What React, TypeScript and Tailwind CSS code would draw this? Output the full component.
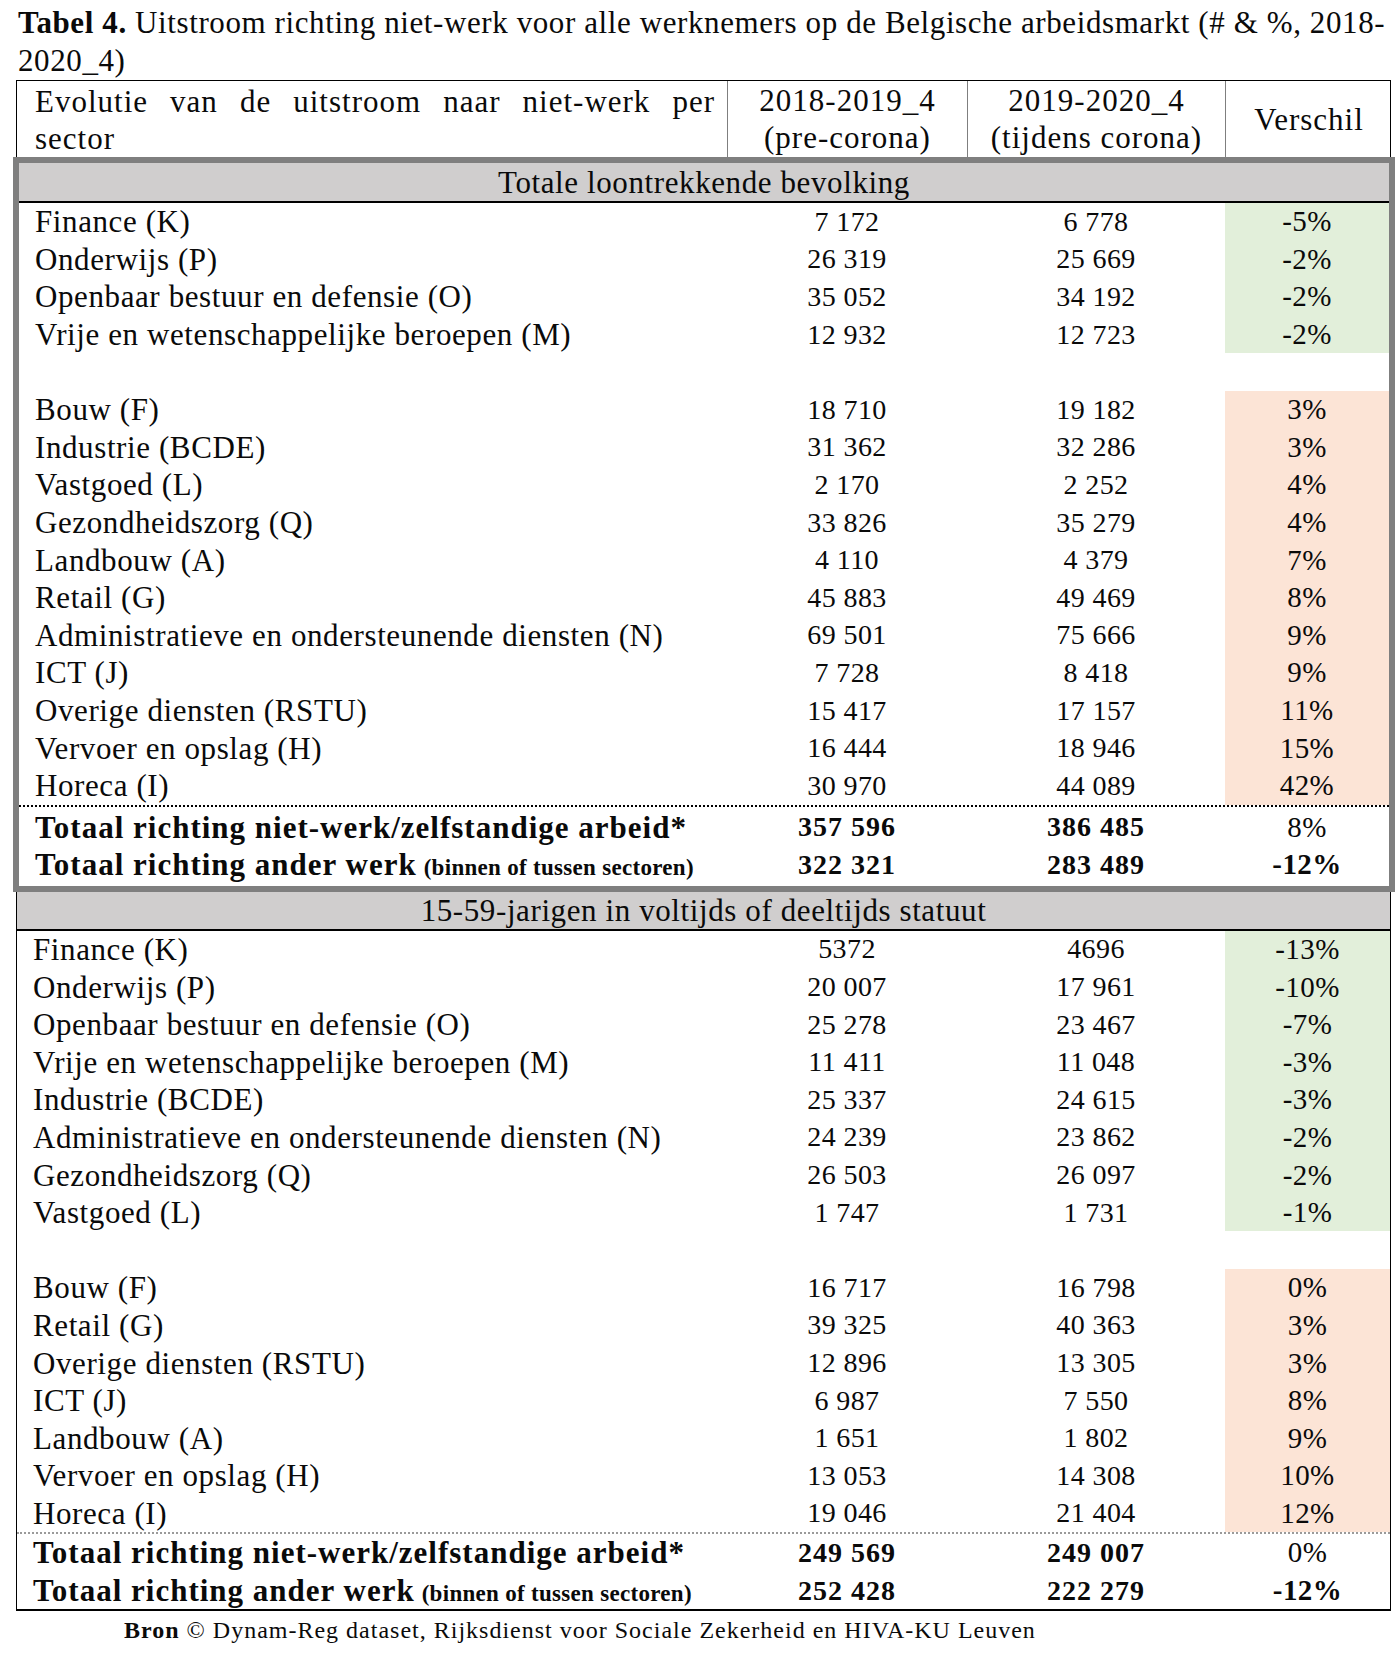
import React from 'react';

type Row = [string, string, string, string];

const s1Green: Row[] = [
  ['Finance (K)', '7 172', '6 778', '-5%'],
  ['Onderwijs (P)', '26 319', '25 669', '-2%'],
  ['Openbaar bestuur en defensie (O)', '35 052', '34 192', '-2%'],
  ['Vrije en wetenschappelijke beroepen (M)', '12 932', '12 723', '-2%'],
];

const s1Pink: Row[] = [
  ['Bouw (F)', '18 710', '19 182', '3%'],
  ['Industrie (BCDE)', '31 362', '32 286', '3%'],
  ['Vastgoed (L)', '2 170', '2 252', '4%'],
  ['Gezondheidszorg (Q)', '33 826', '35 279', '4%'],
  ['Landbouw (A)', '4 110', '4 379', '7%'],
  ['Retail (G)', '45 883', '49 469', '8%'],
  ['Administratieve en ondersteunende diensten (N)', '69 501', '75 666', '9%'],
  ['ICT (J)', '7 728', '8 418', '9%'],
  ['Overige diensten (RSTU)', '15 417', '17 157', '11%'],
  ['Vervoer en opslag (H)', '16 444', '18 946', '15%'],
  ['Horeca (I)', '30 970', '44 089', '42%'],
];

const s2Green: Row[] = [
  ['Finance (K)', '5372', '4696', '-13%'],
  ['Onderwijs (P)', '20 007', '17 961', '-10%'],
  ['Openbaar bestuur en defensie (O)', '25 278', '23 467', '-7%'],
  ['Vrije en wetenschappelijke beroepen (M)', '11 411', '11 048', '-3%'],
  ['Industrie (BCDE)', '25 337', '24 615', '-3%'],
  ['Administratieve en ondersteunende diensten (N)', '24 239', '23 862', '-2%'],
  ['Gezondheidszorg (Q)', '26 503', '26 097', '-2%'],
  ['Vastgoed (L)', '1 747', '1 731', '-1%'],
];

const s2Pink: Row[] = [
  ['Bouw (F)', '16 717', '16 798', '0%'],
  ['Retail (G)', '39 325', '40 363', '3%'],
  ['Overige diensten (RSTU)', '12 896', '13 305', '3%'],
  ['ICT (J)', '6 987', '7 550', '8%'],
  ['Landbouw (A)', '1 651', '1 802', '9%'],
  ['Vervoer en opslag (H)', '13 053', '14 308', '10%'],
  ['Horeca (I)', '19 046', '21 404', '12%'],
];

// kolommen binnen het dikke kader (blok 1) en binnen het dunne kader (blok 2)
const cols1 = 'grid grid-cols-[708px_240px_258px_164px]';
const cols2 = 'grid grid-cols-[710px_240px_258px_165px]';

const LABEL = 'pl-[16px] whitespace-nowrap text-[31px] tracking-[0.6px]';
const NUM = 'text-center text-[28px] tracking-[0.4px]';
const PCT = 'text-[29px] tracking-[0.4px]';

function DataRow({ row, tint, cols }: { row: Row; tint: string; cols: string }) {
  return (
    <div className={`${cols} h-[37.6px] items-center`}>
      <div className={LABEL}>{row[0]}</div>
      <div className={NUM}>{row[1]}</div>
      <div className={NUM}>{row[2]}</div>
      <div className={`h-full flex items-center justify-center ${PCT} ${tint}`}>{row[3]}</div>
    </div>
  );
}

function Blank({ cols }: { cols: string }) {
  return (
    <div className={`${cols} h-[37.6px]`}>
      <div />
      <div />
      <div />
      <div />
    </div>
  );
}

function Totals({ cols, a, b }: { cols: string; a: Row; b: Row }) {
  return (
    <>
      <div className={`${cols} h-[37.6px] items-center`}>
        <div className="pl-[16px] whitespace-nowrap font-bold text-[31px] tracking-[1px]">{a[0]}</div>
        <div className="text-center font-bold text-[28px] tracking-[1px]">{a[1]}</div>
        <div className="text-center font-bold text-[28px] tracking-[1px]">{a[2]}</div>
        <div className={`text-center ${PCT}`}>{a[3]}</div>
      </div>
      <div className={`${cols} h-[37.6px] items-center`}>
        <div className="pl-[16px] whitespace-nowrap">
          <span className="font-bold text-[31px] tracking-[1px]">{b[0]}</span>{' '}
          <span className="font-bold text-[23px] tracking-[0.3px]">(binnen of tussen sectoren)</span>
        </div>
        <div className="text-center font-bold text-[28px] tracking-[1px]">{b[1]}</div>
        <div className="text-center font-bold text-[28px] tracking-[1px]">{b[2]}</div>
        <div className={`text-center font-bold ${PCT}`}>{b[3]}</div>
      </div>
    </>
  );
}

const GREEN = 'bg-[#e2efda]';
const PINK = 'bg-[#fce4d6]';

export default function App() {
  return (
    <div className="w-[1400px] min-h-[1653px] bg-white font-[family-name:'Liberation_Serif',serif] text-[#0a0a0a] text-[28px] leading-none">
      {/* Titel */}
      <div className="pt-[4px] pl-[18px] text-[31px] tracking-[0.6px] leading-[38px] whitespace-nowrap">
        <span className="font-bold">Tabel 4.</span> Uitstroom richting niet-werk voor alle werknemers op de Belgische arbeidsmarkt (# &amp; %, 2018-
        <br />
        2020_4)
      </div>

      <div className="ml-[16px] w-[1375px]">
        {/* Kolomkoppen */}
        <div className="grid grid-cols-[711px_240px_258px_166px] h-[77px] border border-b-0 border-black text-[31px] tracking-[1px]">
          <div className="border-r border-[#7f7f7f] pl-[18px] pr-[12px] pt-[2px] leading-[37px]">
            <div className="text-justify [text-align-last:justify]">Evolutie van de uitstroom naar niet-werk per</div>
            <div>sector</div>
          </div>
          <div className="border-r border-[#7f7f7f] flex flex-col items-center justify-center leading-[37px]">
            <span>2018-2019_4</span>
            <span>(pre-corona)</span>
          </div>
          <div className="border-r border-[#7f7f7f] flex flex-col items-center justify-center leading-[37px]">
            <span>2019-2020_4</span>
            <span>(tijdens corona)</span>
          </div>
          <div className="flex items-center justify-center">Verschil</div>
        </div>

        {/* Blok 1: totale loontrekkende bevolking */}
        <div className="-ml-[3px] w-[1382px] border-[6px] border-[#7f7f7f] pb-[2px]">
          <div className="h-[40px] bg-[#d0cece] border-b-2 border-black flex items-center justify-center text-[31px] tracking-[0.6px]">
            Totale loontrekkende bevolking
          </div>
          {s1Green.map((r) => (
            <DataRow key={r[0]} row={r} tint={GREEN} cols={cols1} />
          ))}
          <Blank cols={cols1} />
          {s1Pink.map((r) => (
            <DataRow key={r[0]} row={r} tint={PINK} cols={cols1} />
          ))}
          <div className="border-t-2 border-dotted border-black mb-[2px]" />
          <Totals
            cols={cols1}
            a={['Totaal richting niet-werk/zelfstandige arbeid*', '357 596', '386 485', '8%']}
            b={['Totaal richting ander werk', '322 321', '283 489', '-12%']}
          />
        </div>

        {/* Blok 2: 15-59-jarigen */}
        <div className="border-x border-b-2 border-black [&>div]:pl-0">
          <div className="h-[39px] bg-[#d0cece] border-b-2 border-black flex items-center justify-center text-[31px] tracking-[0.6px]">
            15-59-jarigen in voltijds of deeltijds statuut
          </div>
          <div className="pl-[2px]">
            {s2Green.map((r) => (
              <DataRow key={r[0]} row={r} tint={GREEN} cols={cols2} />
            ))}
            <Blank cols={cols2} />
            {s2Pink.map((r) => (
              <DataRow key={r[0]} row={r} tint={PINK} cols={cols2} />
            ))}
          </div>
          <div className="border-t-2 border-dotted border-[#9a9a9a]" />
          <div className="pl-[2px]">
            <Totals
              cols={cols2}
              a={['Totaal richting niet-werk/zelfstandige arbeid*', '249 569', '249 007', '0%']}
              b={['Totaal richting ander werk', '252 428', '222 279', '-12%']}
            />
          </div>
        </div>
      </div>

      {/* Bron */}
      <div className="pl-[124px] pt-[6px] text-[24px] tracking-[1px] leading-[26px] whitespace-nowrap">
        <span className="font-bold">Bron</span> © Dynam-Reg dataset, Rijksdienst voor Sociale Zekerheid en HIVA-KU Leuven
      </div>
    </div>
  );
}
